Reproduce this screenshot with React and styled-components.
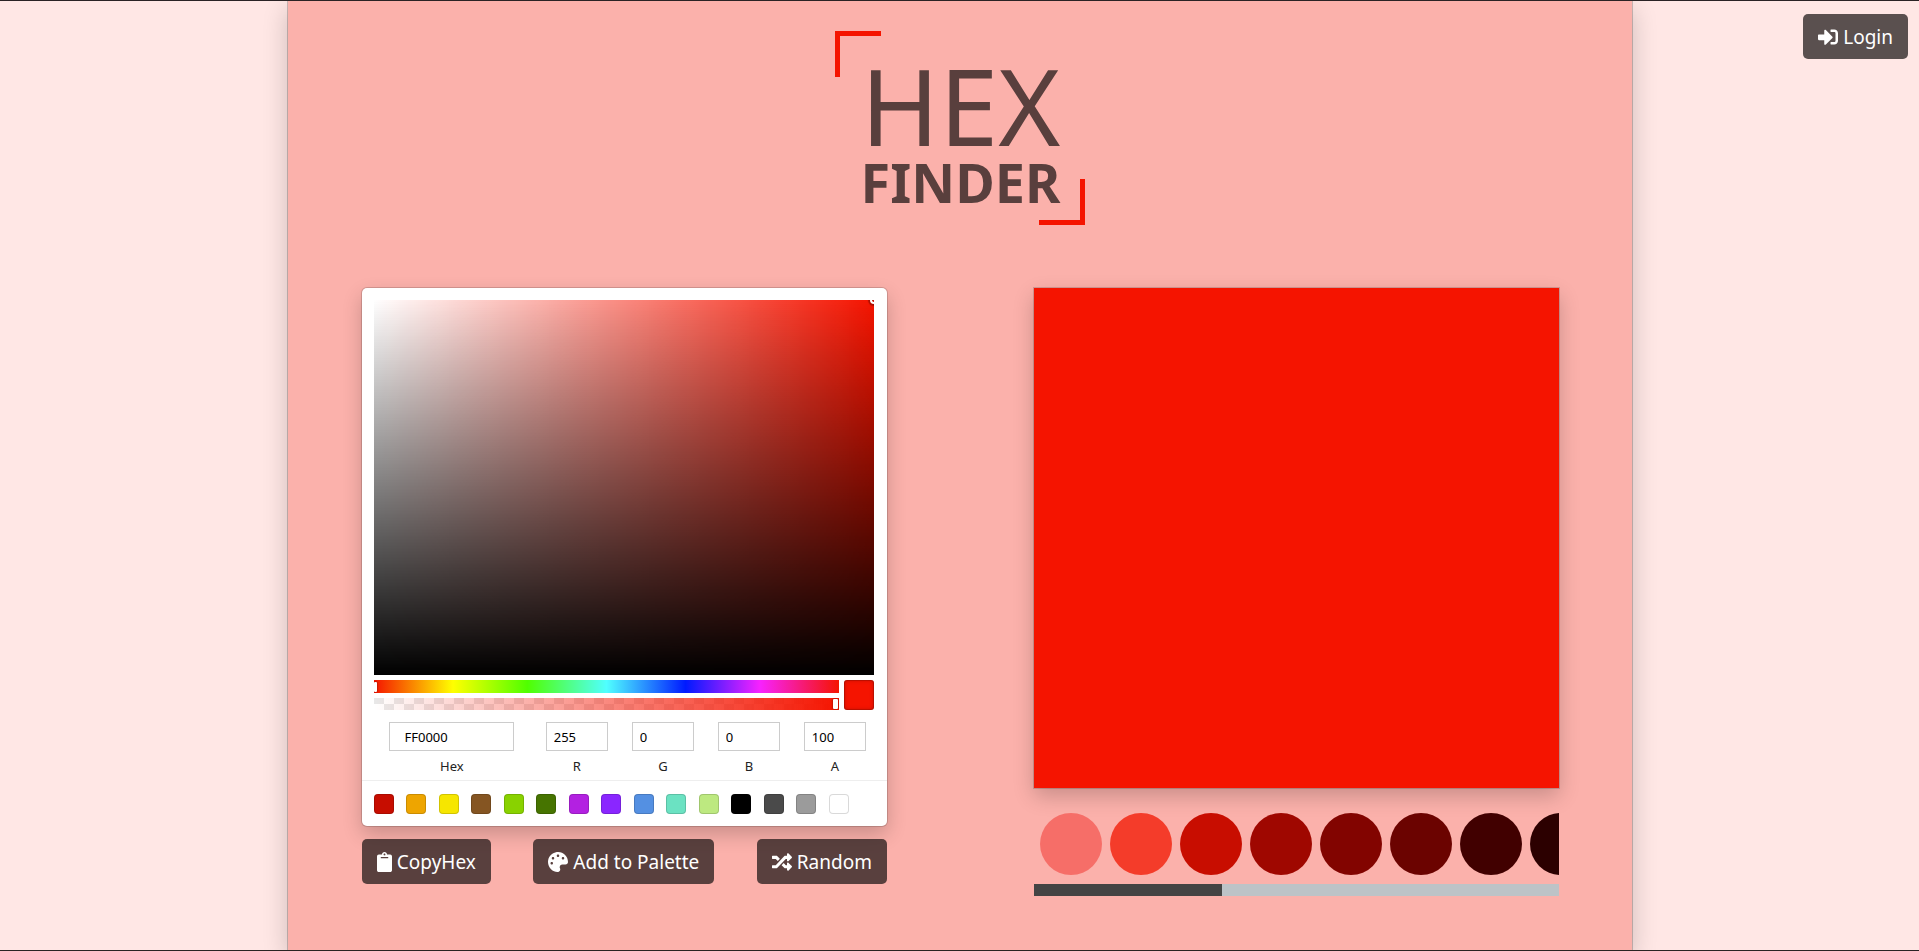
import React from "react";
import styled, { createGlobalStyle } from "styled-components";
import { FaClipboard, FaPalette, FaRandom, FaSignInAlt } from "react-icons/fa";

const RED = "#f51400";
const INK = "#593f3d";
const SHADOW = "0 0 0 1px rgba(0, 0, 0, 0.15), 0 8px 20px rgba(0, 0, 0, 0.2)";

const GlobalStyle = createGlobalStyle`
  *, *::before, *::after { box-sizing: border-box; }
  body {
    margin: 0;
    background: #ffe7e5;
    font-family: "Noto Sans", "Open Sans", sans-serif;
    color: #222;
  }
`;

const Page = styled.div`
  position: relative;
  min-height: 100vh;
  display: flex;
  border: solid #2a2224;
  border-width: 1px 0;
  overflow: hidden;
`;

const Main = styled.main`
  width: calc(70% + 1px);
  margin-left: 15%;
  padding: 30px 73px 0 74px;
  background: #fbb1ab;
  box-shadow: 0 0 0 1px rgba(0, 0, 0, 0.2), 0 8px 24px rgba(0, 0, 0, 0.2);
`;

const Button = styled.button`
  display: inline-flex;
  align-items: center;
  gap: 5px;
  height: 45px;
  padding: 0 15px;
  border: 0;
  border-radius: 5px;
  background: rgba(20, 15, 15, 0.7);
  color: #fff;
  font: inherit;
  font-size: 19px;
  white-space: nowrap;
  cursor: pointer;

  svg {
    flex: none;
    width: ${(p) => p.$iconWidth || 20}px;
    height: 20px;
  }
`;

const LoginButton = styled(Button)`
  position: absolute;
  top: 13px;
  right: 11px;
`;

const Logo = styled.h1`
  position: relative;
  display: flex;
  flex-direction: column;
  align-items: center;
  width: 250px;
  height: 194px;
  margin: 0 auto 63px;
  padding-top: 23px;
  color: ${INK};

  &::before,
  &::after {
    content: "";
    position: absolute;
    width: 46px;
    height: 46px;
    border: 0 solid ${RED};
  }
  &::before {
    top: 0;
    left: 0;
    border-width: 5px 0 0 5px;
  }
  &::after {
    right: 0;
    bottom: 0;
    border-width: 0 5px 5px 0;
  }
`;

const LogoTop = styled.span`
  font-size: 106px;
  font-weight: 400;
  line-height: 102px;
`;

const LogoBottom = styled.span`
  font-size: 54px;
  font-weight: 700;
  line-height: 52px;
`;

const Panels = styled.div`
  display: grid;
  grid-template-columns: 1fr 1fr;
  column-gap: 147px;
  align-items: start;
`;

const Panel = styled.section`
  min-width: 0;
`;

const Picker = styled.div`
  padding-top: 12px;
  border-radius: 5px;
  background: #fff;
  box-shadow: ${SHADOW};
`;

const PickerBody = styled.div`
  padding: 0 13px 0 12px;
`;

const Saturation = styled.div`
  position: relative;
  aspect-ratio: 4 / 3;
  overflow: hidden;
  background:
    linear-gradient(to top, #000, transparent),
    linear-gradient(to right, #fff, rgba(255, 255, 255, 0)),
    ${RED};
`;

const Pointer = styled.span`
  position: absolute;
  top: -4px;
  right: -4px;
  width: 8px;
  height: 8px;
  border: 2px solid #fff;
  border-radius: 50%;
  box-shadow: inset 0 0 1px 1px rgba(0, 0, 0, 0.3), 0 0 1px 2px rgba(0, 0, 0, 0.3);
`;

const Controls = styled.div`
  display: flex;
  gap: 5px;
  padding-top: 5px;
`;

const Sliders = styled.div`
  flex: 1;
  display: flex;
  flex-direction: column;
  gap: 5px;
`;

const Slider = styled.input.attrs({ type: "range" })`
  appearance: none;
  display: block;
  width: 100%;
  height: ${(p) => p.$height}px;
  margin: 0;
  padding: 0 ${(p) => p.$inset}px 0 0;
  overflow: hidden;
  background: ${(p) => p.$track};

  &::-webkit-slider-thumb {
    appearance: none;
    width: ${(p) => p.$thumb}px;
    height: 10px;
    border-radius: 1px;
    background: #fff;
    box-shadow: 0 0 2px rgba(0, 0, 0, 0.6);
  }
`;

const HUES =
  "linear-gradient(to right, #f51400, #ffff00 17%, #50ff00 33%, #50ffff 50%, #001aff 67%, #f722ff 83%, #f51400)";
const ALPHA =
  "linear-gradient(to right, rgba(245, 20, 0, 0), #f51400), repeating-conic-gradient(#fff 0 25%, #e8e8e8 0 50%) 0 0 / 20px 12px";

const Current = styled.div`
  width: 30px;
  height: 30px;
  border-radius: 3px;
  background: ${RED};
  box-shadow: inset 0 0 0 1px rgba(0, 0, 0, 0.15), inset 0 0 4px rgba(0, 0, 0, 0.25);
`;

const Fields = styled.div`
  display: grid;
  grid-template-columns: 2fr repeat(4, 1fr);
  gap: 8px;
  padding: 12px 0 4px;
`;

const Field = styled.label`
  display: flex;
  flex-direction: column;
  align-items: center;
  min-width: 0;
  font-size: 13px;
  line-height: 20px;
  gap: 5px;
`;

const FieldInput = styled.input`
  width: 80%;
  height: 29px;
  padding: 0 0 0 9%;
  border: 1px solid #ccc;
  background: #fff;
  color: #000;
  font: inherit;
`;

const Presets = styled.div`
  display: flex;
  justify-content: space-between;
  padding: 13px 38px 12px 12px;
  border-top: 1px solid #eee;
`;

const Preset = styled.button`
  width: 20px;
  height: 20px;
  padding: 0;
  border: 0;
  border-radius: 4px;
  background: ${(p) => p.$color};
  box-shadow: inset 0 0 0 1px rgba(0, 0, 0, 0.15);
`;

const Actions = styled.div`
  display: flex;
  justify-content: space-between;
  margin-top: 13px;
`;

const Preview = styled.div`
  height: 500px;
  background: ${RED};
  box-shadow: ${SHADOW};
`;

const Shades = styled.div`
  position: relative;
  display: flex;
  gap: 8px;
  margin-top: 25px;
  padding: 0 6px 9px;
  overflow: hidden;
`;

const Shade = styled.button`
  flex: none;
  width: 62px;
  height: 62px;
  padding: 0;
  border: 0;
  border-radius: 50%;
  background: ${(p) => p.$color};
`;

const ScrollTrack = styled.div`
  height: 12px;
  background: #bdc3c7;
`;

const ScrollThumb = styled.div`
  width: calc(100% * 5 / 14);
  height: 100%;
  background: #444;
`;

const presets = [
  "#c70d00", "#eea500", "#f6e600", "#855522", "#89d200", "#467400", "#b321e1", "#8a26ff",
  "#5490e2", "#6be2c2", "#bde980", "#000000", "#4a4a4a", "#9b9b9b", "#ffffff",
];

const shades = [
  "#f66e68", "#f43c2a", "#c80d00", "#9f0700", "#820400", "#6b0300", "#410000", "#2c0000",
];

const fields = [
  ["Hex", "FF0000"],
  ["R", "255"],
  ["G", "0"],
  ["B", "0"],
  ["A", "100"],
];

export default function App() {
  return (
    <Page>
      <GlobalStyle />
      <Main>
        <Logo>
          <LogoTop>HEX</LogoTop>
          <LogoBottom>FINDER</LogoBottom>
        </Logo>
        <Panels>
          <Panel>
            <Picker>
              <PickerBody>
                <Saturation>
                  <Pointer />
                </Saturation>
                <Controls>
                  <Sliders>
                    <Slider
                      aria-label="Hue" min="0" max="360" defaultValue="0"
                      $height={13} $thumb={3} $inset={0} $track={HUES}
                    />
                    <Slider
                      aria-label="Alpha" min="0" max="100" defaultValue="100"
                      $height={12} $thumb={5} $inset={1} $track={ALPHA}
                    />
                  </Sliders>
                  <Current />
                </Controls>
                <Fields>
                  {fields.map(([label, value]) => (
                    <Field key={label}>
                      <FieldInput defaultValue={value} />
                      {label}
                    </Field>
                  ))}
                </Fields>
              </PickerBody>
              <Presets>
                {presets.map((color) => (
                  <Preset key={color} type="button" aria-label={color} $color={color} />
                ))}
              </Presets>
            </Picker>
            <Actions>
              <Button type="button" $iconWidth={15}><FaClipboard />CopyHex</Button>
              <Button type="button"><FaPalette />Add to Palette</Button>
              <Button type="button"><FaRandom />Random</Button>
            </Actions>
          </Panel>
          <Panel>
            <Preview />
            <Shades>
              {shades.map((color) => (
                <Shade key={color} type="button" aria-label={color} $color={color} />
              ))}
            </Shades>
            <ScrollTrack>
              <ScrollThumb />
            </ScrollTrack>
          </Panel>
        </Panels>
      </Main>
      <LoginButton type="button"><FaSignInAlt />Login</LoginButton>
    </Page>
  );
}
